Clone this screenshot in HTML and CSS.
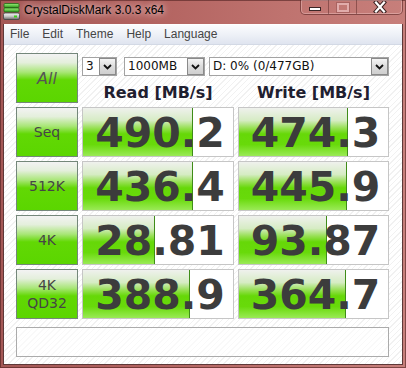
FILE: index.html
```html
<!DOCTYPE html>
<html>
<head>
<meta charset="utf-8">
<link rel="stylesheet" href="styles.css">
</head>
<body>
<div class="window">
  <div class="titlebar">
    <svg class="app-icon" width="17" height="17" viewBox="0 0 17 17">
      <defs>
        <linearGradient id="g1" x1="0" y1="0" x2="0" y2="1">
          <stop offset="0" stop-color="#9af07a"/>
          <stop offset="1" stop-color="#2f9a1c"/>
        </linearGradient>
        <linearGradient id="g2" x1="0" y1="0" x2="0" y2="1">
          <stop offset="0" stop-color="#f4f4f4"/>
          <stop offset="0.5" stop-color="#c8c8c8"/>
          <stop offset="1" stop-color="#6a6a6a"/>
        </linearGradient>
      </defs>
      <rect x="1" y="0.5" width="15" height="4" rx="1" fill="url(#g1)" stroke="#1f6a14" stroke-width="0.8"/>
      <rect x="1" y="5" width="15" height="4" rx="1" fill="url(#g1)" stroke="#1f6a14" stroke-width="0.8"/>
      <rect x="0.5" y="10" width="16" height="6.5" rx="1.5" fill="url(#g2)" stroke="#444" stroke-width="0.8"/>
      <rect x="11" y="12.5" width="3" height="2" fill="#3ad01a"/>
    </svg>
    <span class="title">CrystalDiskMark 3.0.3 x64</span>
    <div class="caption">
      <div class="cbtn cmin"><span class="min-glyph"></span></div>
      <div class="cbtn cmax"><span class="max-glyph"></span></div>
      <div class="cbtn cclose">
        <svg width="14" height="12" viewBox="0 0 14 12">
          <path d="M3 1.5 L11 10.5 M11 1.5 L3 10.5" stroke="#3a2222" stroke-width="4.2" stroke-linecap="square" fill="none"/>
          <path d="M3 1.5 L11 10.5 M11 1.5 L3 10.5" stroke="#ffffff" stroke-width="2.2" stroke-linecap="square" fill="none"/>
        </svg>
      </div>
    </div>
  </div>
  <div class="client">
    <div class="menubar">
      <span class="menu-item">File</span>
      <span class="menu-item">Edit</span>
      <span class="menu-item">Theme</span>
      <span class="menu-item">Help</span>
      <span class="menu-item">Language</span>
    </div>
    <div class="content">
      <div class="grid">
        <div class="btn all">All</div>
        <div class="controls">
          <div class="selects">
            <div class="combo c-count"><span class="combo-text">3</span><span class="arrow"><svg width="9" height="6" viewBox="0 0 9 6"><path d="M1 1 L4.5 4.5 L8 1" stroke="#111" stroke-width="1.8" fill="none"/></svg></span></div>
            <div class="combo c-size"><span class="combo-text">1000MB</span><span class="arrow"><svg width="9" height="6" viewBox="0 0 9 6"><path d="M1 1 L4.5 4.5 L8 1" stroke="#111" stroke-width="1.8" fill="none"/></svg></span></div>
            <div class="combo c-drive"><span class="combo-text">D: 0% (0/477GB)</span><span class="arrow"><svg width="9" height="6" viewBox="0 0 9 6"><path d="M1 1 L4.5 4.5 L8 1" stroke="#111" stroke-width="1.8" fill="none"/></svg></span></div>
          </div>
          <div class="headers">
            <span class="head">Read [MB/s]</span>
            <span class="head">Write [MB/s]</span>
          </div>
        </div>

        <div class="btn">Seq</div>
        <div class="val" style="--w:110px">490.2</div>
        <div class="val" style="--w:109px">474.3</div>

        <div class="btn">512K</div>
        <div class="val" style="--w:110px">436.4</div>
        <div class="val" style="--w:108px">445.9</div>

        <div class="btn">4K</div>
        <div class="val" style="--w:72px">28.81</div>
        <div class="val" style="--w:88px">93.87</div>

        <div class="btn two">4K<br>QD32</div>
        <div class="val" style="--w:107px">388.9</div>
        <div class="val" style="--w:107px">364.7</div>
      </div>
      <div class="status"></div>
    </div>
  </div>
</div>
</body>
</html>
```

FILE: styles.css
```css
html, body {
  margin: 0;
  padding: 0;
}
body {
  width: 406px;
  height: 368px;
  overflow: hidden;
  font-family: "Liberation Sans", Arial, sans-serif;
}
.window {
  box-sizing: border-box;
  width: 406px;
  height: 368px;
  padding: 0 3px 3px 3px;
  display: flex;
  flex-direction: column;
  background:
    linear-gradient(90deg, #a45856 0%, #b2625f 35%, #bf736f 70%, #c77f7b 100%);
  box-shadow: inset 0 0 0 1px rgba(70, 25, 25, 0.55);
}
.titlebar {
  height: 24px;
  flex: none;
  display: flex;
  align-items: flex-start;
}
.app-icon {
  margin-top: 3px;
  flex: none;
}
.title {
  margin-left: 4px;
  line-height: 20px;
  font-size: 12px;
  color: #000;
  text-shadow: 0 0 6px rgba(255, 235, 235, 0.85), 0 0 10px rgba(255, 235, 235, 0.6);
}
.caption {
  margin-left: auto;
  height: 15px;
  display: flex;
  box-sizing: border-box;
  border: 1px solid rgba(80, 30, 30, 0.55);
  border-top: none;
  border-radius: 0 0 5px 5px;
  box-shadow: inset 0 0 0 1px rgba(255, 220, 220, 0.35);
  overflow: hidden;
}
.cbtn {
  height: 14px;
  display: flex;
  align-items: center;
  justify-content: center;
}
.cmin {
  width: 27px;
  border-right: 1px solid rgba(80, 30, 30, 0.45);
}
.cmax {
  width: 27px;
  border-right: 1px solid rgba(80, 30, 30, 0.45);
}
.cclose {
  width: 45px;
}
.min-glyph {
  width: 10px;
  height: 2px;
  background: #fff;
  border: 1px solid #3a2626;
  margin-top: 3px;
}
.max-glyph {
  width: 8px;
  height: 5px;
  border: 2px solid rgba(235, 190, 190, 0.75);
  box-shadow: 0 0 0 1px rgba(120, 60, 60, 0.35);
}
.client {
  flex: 1;
  display: flex;
  flex-direction: column;
  border: 1px solid #5e3838;
  border-top: none;
  background-color: #fff;
  background-image: repeating-linear-gradient(135deg, #ffffff 0 3px, #f1f1f1 3px 4px);
}
.menubar {
  flex: none;
  display: flex;
  border-top: 1px solid #ffffff;
  box-sizing: border-box;
  height: 21px;
  border-bottom: 1px solid #d3d9e5;
  background: linear-gradient(#fbfcfe 0%, #eef1f7 50%, #dfe4ef 100%);
}
.menu-item {
  padding: 0 6.5px;
  font-size: 12px;
  line-height: 19px;
  color: #454545;
}
.menu-item:first-child {
  padding-left: 6px;
}
.content {
  flex: 1;
  padding: 8px 12px 0 12px;
}
.grid {
  display: grid;
  grid-template-columns: 62px 152px 151px;
  grid-auto-rows: 50px;
  gap: 4px;
}
.btn {
  box-sizing: border-box;
  border: 1px solid #74877a;
  background: linear-gradient(#f3f3f3 0%, #e4efdc 18%, #a8e676 38%, #62d804 54%, #5bd600 100%);
  display: flex;
  align-items: center;
  justify-content: center;
  text-align: center;
  font-family: "DejaVu Sans", sans-serif;
  font-size: 14px;
  color: #454545;
}
.btn.two {
  line-height: 18px;
}
.btn.all {
  font-size: 16px;
  font-style: italic;
  color: #555;
}
.controls {
  grid-column: 2 / 4;
  display: flex;
  flex-direction: column;
}
.selects {
  margin-top: 4px;
  height: 19px;
  display: flex;
}
.combo {
  box-sizing: border-box;
  height: 19px;
  border: 1px solid #a3a3a3;
  background: #fff;
  display: flex;
  align-items: stretch;
}
.c-count { width: 35px; }
.c-size { width: 81px; margin-left: 7px; }
.c-drive { width: 180px; margin-left: 4px; }
.combo-text {
  padding-left: 3px;
  font-family: "DejaVu Sans", sans-serif;
  font-size: 12px;
  line-height: 17px;
  color: #111;
}
.arrow {
  margin-left: auto;
  width: 17px;
  box-sizing: border-box;
  border: 1px solid #8a8a8a;
  background: linear-gradient(#f4f4f4, #dcdcdc 50%, #cfcfcf);
  display: flex;
  align-items: center;
  justify-content: center;
}
.headers {
  display: grid;
  grid-template-columns: 152px 151px;
  gap: 4px;
  padding-top: 7px;
}
.head {
  text-align: center;
  font-family: "DejaVu Sans", sans-serif;
  font-weight: bold;
  font-size: 16px;
  line-height: 20px;
  color: #1f2030;
}
.val {
  box-sizing: border-box;
  border: 1px solid #c6c6c6;
  padding: 2px 0 0 4px;
  text-align: center;
  font-family: "DejaVu Sans", sans-serif;
  font-weight: bold;
  font-size: 41px;
  line-height: 46px;
  color: #3c3c3c;
  background:
    linear-gradient(#3f8c18, #3f8c18) calc(var(--w) - 1px) 0 / 1px 100% no-repeat,
    linear-gradient(#eff1ed 0%, #d6ecc4 26%, #96e052 42%, #66d808 54%, #68da0a 76%, #9aea56 100%) 0 0 / var(--w) 100% no-repeat,
    #ffffff;
}
.status {
  box-sizing: border-box;
  margin-top: 8px;
  width: 373px;
  height: 30px;
  border: 1px solid #ababab;
  background: rgba(255, 255, 255, 0.6);
}
```
